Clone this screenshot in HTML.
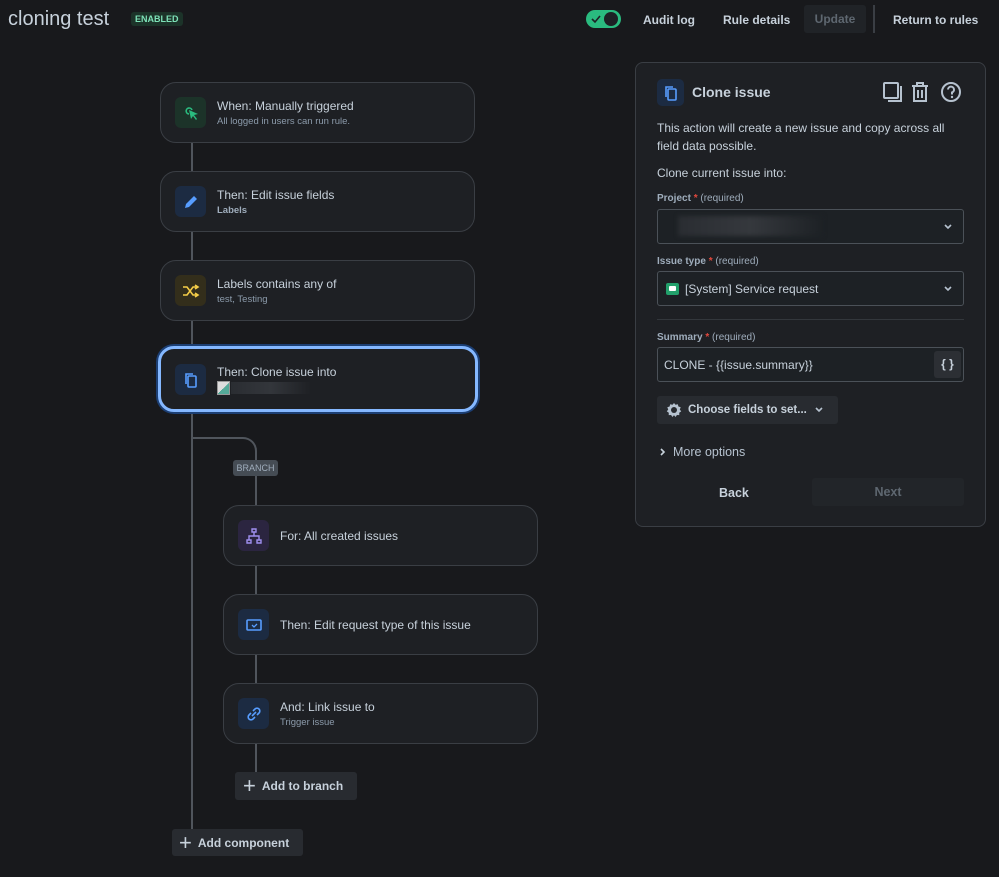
<!DOCTYPE html>
<html><head><meta charset="utf-8"><style>
*{box-sizing:border-box;margin:0;padding:0}
body{width:999px;height:877px;background:#18191c;font-family:"Liberation Sans",sans-serif;color:#b6c2cf;position:relative;overflow:hidden}
.a{position:absolute}
.card{position:absolute;width:315px;height:61px;border:1px solid #3a3e44;border-radius:16px;background:#1e2024}
.ic{position:absolute;left:14px;top:14px;width:31px;height:31px;border-radius:6px;display:flex;align-items:center;justify-content:center}
.t1{position:absolute;left:56px;font-size:12px;color:#c7d1db;white-space:nowrap}
.t2{position:absolute;left:56px;font-size:9.5px;color:#8c9bab;white-space:nowrap}
.line{position:absolute;background:#50555c;width:2px}
.btn{position:absolute;background:#282b30;border-radius:3px;color:#c7d1db;font-weight:bold;font-size:12px;display:flex;align-items:center;white-space:nowrap}
.lbl{position:absolute;left:21px;font-size:10px;font-weight:bold;color:#9fadbc}
.lbl span{color:#e2483d}
.lbl i{font-style:normal;font-weight:normal;color:#9fadbc}
.inp{position:absolute;left:21px;width:307px;border:1px solid #4b5158;border-radius:3px;background:#1d2125}
.nav{position:absolute;top:13px;font-size:12px;font-weight:bold;color:#c7d1db;white-space:nowrap}
</style></head><body>
<div class="a" style="left:8px;top:8px;font-size:20px;color:#c7d1db">cloning test</div>
<div class="a" style="left:131px;top:12px;background:#1c3329;color:#7ee2b8;font-size:9px;font-weight:bold;padding:2px 4px;border-radius:3px">ENABLED</div>
<div class="a" style="left:586px;top:10px;width:35px;height:18px;border-radius:9px;background:#2abb7f"><div class="a" style="left:18px;top:2px;width:14px;height:14px;border-radius:50%;background:#1d2125"></div><svg class="a" style="left:5px;top:4px" width="10" height="10" viewBox="0 0 10 10"><path d="M1 5l3 3 5-6" stroke="#1d2125" stroke-width="1.6" fill="none"/></svg></div>
<div class="nav" style="left:643px">Audit log</div>
<div class="nav" style="left:723px">Rule details</div>
<div class="a" style="left:804px;top:5px;width:62px;height:28px;background:#202327;border-radius:3px;color:#5e6770;font-size:12px;font-weight:bold;text-align:center;line-height:28px">Update</div>
<div class="a" style="left:873px;top:5px;width:2px;height:28px;background:#3a3e44"></div>
<div class="nav" style="left:893px">Return to rules</div>

<div class="line" style="left:191px;top:143px;height:688px"></div>
<div class="a" style="left:192px;top:437px;width:65px;height:70px;border-top:2px solid #50555c;border-right:2px solid #50555c;border-top-right-radius:14px"></div>
<div class="line" style="left:255px;top:566px;height:30px"></div>
<div class="line" style="left:255px;top:655px;height:30px"></div>
<div class="line" style="left:255px;top:744px;height:30px"></div>
<div class="a" style="left:233px;top:460px;width:45px;height:16px;background:#454c54;border-radius:3px;color:#9fadbc;font-size:9px;text-align:center;line-height:16px">BRANCH</div>

<div class="card" style="left:160px;top:82px"><div class="ic" style="background:#1c3329"><svg width="16" height="16" viewBox="0 0 16 16"><path d="M6 9a3 3 0 1 1 3-4" stroke="#2abb7f" stroke-width="1.6" fill="none"/><path d="M6 5l9 4-4 1 3 4-1 1-3-4-2 3z" fill="#2abb7f"/></svg></div><div class="t1" style="top:16px">When: Manually triggered</div><div class="t2" style="top:33px">All logged in users can run rule.</div></div>
<div class="card" style="left:160px;top:171px"><div class="ic" style="background:#1c2b42"><svg width="16" height="16" viewBox="0 0 16 16"><path d="M2 14l1-4 8-8 3 3-8 8z" fill="#579dff"/></svg></div><div class="t1" style="top:16px">Then: Edit issue fields</div><div class="t2" style="top:33px;font-weight:bold;color:#9fadbc">Labels</div></div>
<div class="card" style="left:160px;top:260px"><div class="ic" style="background:#332e1b"><svg width="18" height="16" viewBox="0 0 18 16"><path d="M1 4h4l6 8h5M1 12h4l6-8h5M13 2l3 2-3 2M13 10l3 2-3 2" stroke="#f5cd47" stroke-width="1.6" fill="none"/></svg></div><div class="t1" style="top:16px">Labels contains any of</div><div class="t2" style="top:33px">test, Testing</div></div>
<div class="card" style="left:158px;top:346px;width:320px;height:66px;border:3px solid #85b8ff;box-shadow:0 0 0 2px #1c3f74"><div class="ic" style="left:14px;top:15px;background:#1c2b42"><svg width="16" height="16" viewBox="0 0 16 16"><rect x="5" y="4" width="8" height="11" rx="1" stroke="#579dff" stroke-width="1.6" fill="none"/><path d="M3 12V2h7" stroke="#579dff" stroke-width="1.6" fill="none"/></svg></div><div class="t1" style="top:16px">Then: Clone issue into</div><div class="a" style="left:56px;top:32px;width:13px;height:14px;border:1px solid #999;background:linear-gradient(135deg,#ddd 50%,#5a9 50%)"></div><div class="a" style="left:70px;top:33px;width:80px;height:12px;background:linear-gradient(90deg,#2a2d32,#33363b,#1e2024)"></div></div>

<div class="card" style="left:223px;top:505px"><div class="ic" style="background:#2b2540"><svg width="16" height="16" viewBox="0 0 16 16"><path d="M6 1h4v3H6zM1 12h4v3H1zM11 12h4v3h-4zM8 4v4M3 12V8h10v4" stroke="#9f8fef" stroke-width="1.4" fill="none"/></svg></div><div class="t1" style="top:23px">For: All created issues</div></div>
<div class="card" style="left:223px;top:594px"><div class="ic" style="background:#1c2b42"><svg width="16" height="14" viewBox="0 0 16 14"><rect x="1" y="2" width="14" height="10" rx="1" stroke="#579dff" stroke-width="1.6" fill="none"/><path d="M6 7l2 2 3-3" stroke="#579dff" stroke-width="1.3" fill="none"/></svg></div><div class="t1" style="top:23px">Then: Edit request type of this issue</div></div>
<div class="card" style="left:223px;top:683px"><div class="ic" style="background:#1c2b42"><svg width="16" height="16" viewBox="0 0 16 16"><path d="M7 5l2-2a2.8 2.8 0 0 1 4 4l-2 2M9 11l-2 2a2.8 2.8 0 0 1-4-4l2-2M6 10l4-4" stroke="#579dff" stroke-width="1.6" fill="none"/></svg></div><div class="t1" style="top:16px">And: Link issue to</div><div class="t2" style="top:33px">Trigger issue</div></div>

<div class="btn" style="left:235px;top:772px;width:122px;height:28px"><span style="font-size:22px;font-weight:normal;margin:0 6px 0 8px;line-height:1">+</span>Add to branch</div>
<div class="btn" style="left:172px;top:829px;width:131px;height:27px"><span style="font-size:22px;font-weight:normal;margin:0 6px 0 7px;line-height:1">+</span>Add component</div>

<div class="a" style="left:635px;top:62px;width:351px;height:465px;border:1px solid #3a3e44;border-radius:8px;background:#1e2024">
<div class="a" style="left:21px;top:16px;width:27px;height:27px;border-radius:5px;background:#1c2b42;display:flex;align-items:center;justify-content:center"><svg width="16" height="16" viewBox="0 0 16 16"><rect x="5" y="4" width="8" height="11" rx="1" stroke="#579dff" stroke-width="1.6" fill="none"/><path d="M3 12V2h7" stroke="#579dff" stroke-width="1.6" fill="none"/></svg></div>
<div class="a" style="left:56px;top:21px;font-size:14px;font-weight:bold;color:#c7d1db">Clone issue</div>
<svg class="a" style="left:246px;top:17px" width="85" height="24" viewBox="0 0 85 24"><rect x="2" y="3" width="14" height="15" rx="1" stroke="#b6c2cf" stroke-width="2" fill="none"/><path d="M19 6v15H6" stroke="#b6c2cf" stroke-width="2" fill="none"/><path d="M30 6h16M35 6V3h6v3M32 6v15h12V6M36 10v8M40 10v8" stroke="#b6c2cf" stroke-width="2" fill="none"/><circle cx="69" cy="12" r="9" stroke="#b6c2cf" stroke-width="2" fill="none"/><path d="M66 9.5a3 3 0 1 1 4 3v2" stroke="#b6c2cf" stroke-width="2" fill="none"/><circle cx="70" cy="17" r="1.2" fill="#b6c2cf"/></svg>
<div class="a" style="left:21px;top:57px;width:310px;font-size:12px;line-height:17.5px;color:#c7d1db">This action will create a new issue and copy across all field data possible.</div>
<div class="a" style="left:21px;top:103px;font-size:12px;color:#c7d1db">Clone current issue into:</div>
<div class="lbl" style="top:130px">Project <span>*</span> <i>(required)</i></div>
<div class="inp" style="top:146px;height:35px"><div class="a" style="left:20px;top:6px;width:145px;height:20px;background:linear-gradient(90deg,#2a2d32,#35383d,#1d2125);filter:blur(2px)"></div><svg class="a" style="left:285px;top:14px" width="10" height="7"><path d="M2 1l3 3 3-3" stroke="#b6c2cf" stroke-width="1.6" fill="none"/></svg></div>
<div class="lbl" style="top:193px">Issue type <span>*</span> <i>(required)</i></div>
<div class="inp" style="top:208px;height:35px"><div class="a" style="left:8px;top:11px;width:13px;height:12px;background:#22a06b;border-radius:2px"><div class="a" style="left:3px;top:3px;width:7px;height:5px;background:#fff;border-radius:1px"></div></div><div class="a" style="left:27px;top:10px;font-size:12px;color:#c7d1db">[System] Service request</div><svg class="a" style="left:285px;top:14px" width="10" height="7"><path d="M2 1l3 3 3-3" stroke="#b6c2cf" stroke-width="1.6" fill="none"/></svg></div>
<div class="a" style="left:21px;top:256px;width:307px;height:1px;background:#33373c"></div>
<div class="lbl" style="top:269px">Summary <span>*</span> <i>(required)</i></div>
<div class="inp" style="top:284px;height:35px"><div class="a" style="left:6px;top:10px;font-size:12px;color:#c7d1db">CLONE - {{issue.summary}}</div><div class="a" style="left:276px;top:3px;width:27px;height:27px;background:#2c2f34;border-radius:3px;color:#c7d1db;font-weight:bold;font-size:12px;text-align:center;line-height:27px">{ }</div></div>
<div class="btn" style="left:21px;top:333px;width:181px;height:28px"><svg style="margin:0 6px 0 9px" width="16" height="16" viewBox="0 0 16 16"><path d="M8 1l1.5 1.8 2.3-.6.6 2.3 2.3.8-.9 2.2 1.4 1.9-2 1.3.1 2.4-2.4-.1L9.6 15 8 13.3 6.4 15l-1.3-2-2.4.1.1-2.4-2-1.3 1.4-1.9-.9-2.2 2.3-.8.6-2.3 2.3.6z" fill="#b6c2cf"/><circle cx="8" cy="8" r="3" fill="#282b30"/></svg><span style="font-size:11.5px">Choose fields to set...</span><svg style="margin-left:7px" width="10" height="7"><path d="M2 1l3 3 3-3" stroke="#b6c2cf" stroke-width="1.6" fill="none"/></svg></div>
<svg class="a" style="left:23px;top:384px" width="7" height="10"><path d="M2 2l3 3-3 3" stroke="#c7d1db" stroke-width="1.6" fill="none"/></svg>
<div class="a" style="left:37px;top:382px;font-size:12.5px;color:#b6c2cf">More options</div>
<div class="a" style="left:83px;top:423px;font-size:12.5px;font-weight:bold;color:#c7d1db">Back</div>
<div class="a" style="left:176px;top:415px;width:152px;height:28px;background:#222529;border-radius:3px;color:#5e6770;font-size:12.5px;font-weight:bold;text-align:center;line-height:28px">Next</div>
</div>
</body></html>
